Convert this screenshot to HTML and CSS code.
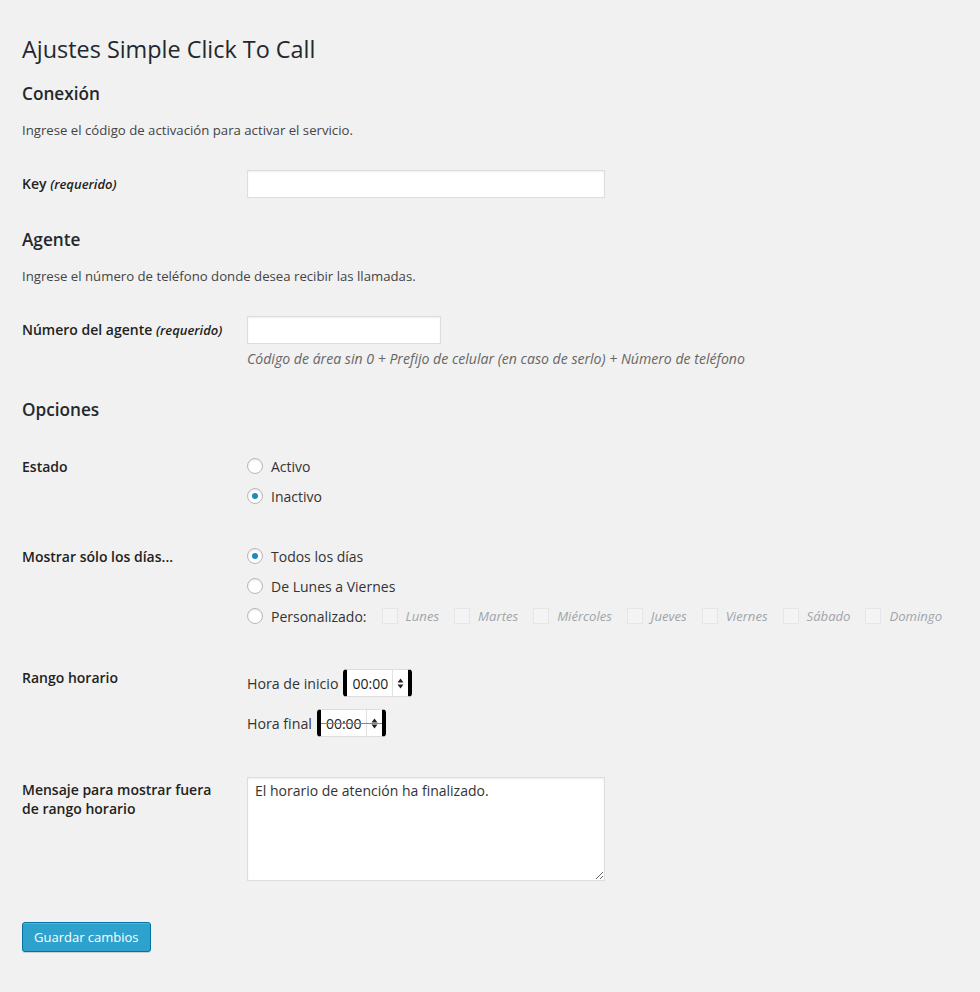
FILE: index.html
```html
<!DOCTYPE html>
<html lang="es">
<head>
<meta charset="utf-8">
<title>Ajustes Simple Click To Call</title>
<link rel="stylesheet" href="styles.css">
</head>
<body>
<div class="wrap">
  <h1>Ajustes Simple Click To Call</h1>

  <h2 class="h-first">Conexión</h2>
  <p class="desc">Ingrese el código de activación para activar el servicio.</p>
  <div class="row row-key">
    <div class="th th-nowrap">Key <em>(requerido)</em></div>
    <div class="td"><input class="text key" type="text"></div>
  </div>

  <h2 class="h-after-row">Agente</h2>
  <p class="desc">Ingrese el número de teléfono donde desea recibir las llamadas.</p>
  <div class="row row-key">
    <div class="th th-nowrap">Número del agente <em>(requerido)</em></div>
    <div class="td">
      <input class="text agent" type="text">
      <p class="hint">Código de área sin 0 + Prefijo de celular (en caso de serlo) + Número de teléfono</p>
    </div>
  </div>

  <h2 class="h-after-hint">Opciones</h2>
  <div class="row row-estado">
    <div class="th th-radio">Estado</div>
    <div class="td options">
      <label class="opt"><span class="radio"></span>Activo</label>
      <label class="opt"><span class="radio checked"></span>Inactivo</label>
    </div>
  </div>

  <div class="row row-dias">
    <div class="th th-radio">Mostrar sólo los días...</div>
    <div class="td options">
      <label class="opt"><span class="radio checked"></span>Todos los días</label>
      <label class="opt"><span class="radio"></span>De Lunes a Viernes</label>
      <div class="opt">
        <span class="radio"></span>Personalizado:
        <span class="days">
          <span class="day"><span class="check"></span>Lunes</span>
          <span class="day"><span class="check"></span>Martes</span>
          <span class="day"><span class="check"></span>Miércoles</span>
          <span class="day"><span class="check"></span>Jueves</span>
          <span class="day"><span class="check"></span>Viernes</span>
          <span class="day"><span class="check"></span>Sábado</span>
          <span class="day"><span class="check"></span>Domingo</span>
        </span>
      </div>
    </div>
  </div>

  <div class="row row-rango">
    <div class="th th-rango">Rango horario</div>
    <div class="td times">
      <div class="time-line">Hora de inicio
        <span class="time"><span class="val">00:00</span><span class="spin"><svg width="7" height="11" viewBox="0 0 7 11"><path d="M3.5 0.5 L6.5 4.5 L0.5 4.5 Z M3.5 10.5 L6.5 6.5 L0.5 6.5 Z" fill="#222"/></svg></span></span>
      </div>
      <div class="time-line">Hora final
        <span class="time struck"><span class="val">00:00</span><span class="spin"><svg width="7" height="11" viewBox="0 0 7 11"><path d="M3.5 0.5 L6.5 4.5 L0.5 4.5 Z M3.5 10.5 L6.5 6.5 L0.5 6.5 Z" fill="#222"/></svg></span></span>
      </div>
    </div>
  </div>

  <div class="row row-msg">
    <div class="th th-msg">Mensaje para mostrar fuera de rango horario</div>
    <div class="td"><textarea class="msg">El horario de atención ha finalizado.</textarea></div>
  </div>

  <button class="btn" type="button">Guardar cambios</button>
</div>
</body>
</html>
```
FILE: styles.css
```css
html, body {
  margin: 0;
  padding: 0;
  background: #f1f1f1;
}
body {
  font-family: "Open Sans", "DejaVu Sans", sans-serif;
  font-size: 13px;
  color: #444;
}
.wrap {
  padding: 35px 20px 40px 22px;
}
h1 {
  margin: 0;
  font-size: 23.4px;
  font-weight: 400;
  line-height: 29px;
  color: #23282d;
}
h2 {
  margin: 0;
  font-size: 17.2px;
  font-weight: 600;
  line-height: 22px;
  color: #23282d;
}
.h-first { margin-top: 19px; }
.h-after-row { margin-top: 31px; }
.h-after-hint { margin-top: 30px; }
.desc {
  margin: 15px 0 0;
  font-size: 13.2px;
  line-height: 20px;
  color: #444;
}
.row {
  display: flex;
  align-items: flex-start;
}
.th {
  width: 200px;
  margin-right: 25px;
  flex: none;
  font-size: 14px;
  font-weight: 600;
  line-height: 20px;
  color: #222;
  padding-top: 4px;
}
.th-nowrap { white-space: nowrap; }
.th em {
  font-size: 13px;
  font-style: italic;
  font-weight: 600;
}
.td {
  flex: 1;
}
.row-key { margin-top: 30px; }
.text {
  display: block;
  box-sizing: border-box;
  height: 28px;
  margin: 0;
  border: 1px solid #ddd;
  background: #fff;
  box-shadow: inset 0 1px 2px rgba(0,0,0,.07);
  font-family: inherit;
  font-size: 14px;
  padding: 3px 5px;
}
.key { width: 358px; }
.agent { width: 194px; }
.hint {
  margin: 5px 0 0;
  font-size: 14.1px;
  font-style: italic;
  line-height: 20px;
  color: #666;
}
.row-estado { margin-top: 35px; }
.row-dias { margin-top: 40px; }
.th-radio { padding-top: 1px; }
.options {
  display: flex;
  flex-direction: column;
  gap: 10px;
}
.opt {
  display: flex;
  align-items: center;
  height: 20px;
  font-size: 14px;
  color: #333;
  white-space: nowrap;
}
.radio {
  box-sizing: border-box;
  width: 16px;
  height: 16px;
  border: 1px solid #b4b9be;
  border-radius: 50%;
  background: #fff;
  box-shadow: inset 0 1px 2px rgba(0,0,0,.1);
  margin-right: 8px;
  flex: none;
  display: flex;
  align-items: center;
  justify-content: center;
}
.radio.checked::before {
  content: "";
  width: 6px;
  height: 6px;
  border-radius: 50%;
  background: #1e8cbe;
}
.days {
  display: flex;
  align-items: center;
  margin-left: 15px;
  gap: 15px;
}
.day {
  display: flex;
  align-items: center;
  font-size: 13.1px;
  font-style: italic;
  color: #a0a5aa;
}
.check {
  box-sizing: border-box;
  width: 16px;
  height: 16px;
  border: 1px solid #e6e6e6;
  background: #f4f4f4;
  margin-right: 8px;
}
.row-rango { margin-top: 43px; }
.th-rango { padding-top: 0; line-height: 18px; }
.times {
  display: flex;
  flex-direction: column;
  gap: 12px;
}
.time-line {
  display: flex;
  align-items: center;
  height: 28px;
  font-size: 14.2px;
  color: #333;
}
.time {
  position: relative;
  display: inline-flex;
  align-items: stretch;
  box-sizing: border-box;
  height: 28px;
  margin-left: 5px;
  background: #fff;
  border: 1px solid #ddd;
  border-left: 4px solid #000;
  border-right: 4px solid #000;
  border-radius: 4px;
}
.val {
  display: flex;
  align-items: center;
  padding: 0 4px 0 5px;
  font-size: 14px;
  color: #222;
}
.spin {
  display: flex;
  align-items: center;
  justify-content: center;
  width: 15px;
  border-left: 1px solid #e2e2e2;
}
.struck::after {
  content: "";
  position: absolute;
  left: 0;
  right: 0;
  top: 13px;
  height: 1px;
  background: #888;
}
.row-msg { margin-top: 40px; }
.th-msg { padding-top: 3px; line-height: 19px; }
.msg {
  display: block;
  box-sizing: border-box;
  width: 358px;
  height: 104px;
  margin: 0;
  padding: 3px 7px;
  border: 1px solid #ddd;
  background: #fff;
  box-shadow: inset 0 1px 2px rgba(0,0,0,.07);
  font-family: inherit;
  font-size: 14px;
  line-height: 20px;
  color: #333;
  resize: both;
}
.btn {
  display: block;
  margin-top: 41px;
  height: 30px;
  padding: 0 11px;
  box-sizing: border-box;
  background: #2ea2cc;
  border: 1px solid #0074a2;
  border-radius: 3px;
  box-shadow: inset 0 1px 0 rgba(120,200,230,.5), 0 1px 0 rgba(0,0,0,.15);
  color: #fff;
  font-family: inherit;
  font-size: 13px;
  line-height: 28px;
  cursor: pointer;
}
```
